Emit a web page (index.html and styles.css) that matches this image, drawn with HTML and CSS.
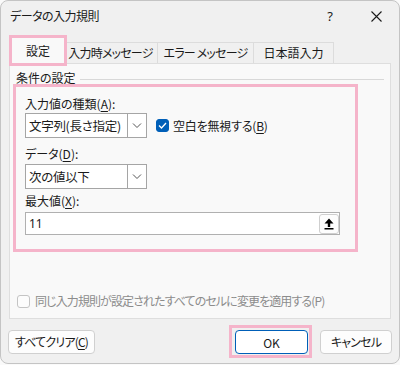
FILE: index.html
```html
<!DOCTYPE html>
<html lang="ja">
<head>
  <meta charset="UTF-8" />
  <title>データの入力規則</title>
  <link rel="stylesheet" href="styles.css">
</head>
<body>

  <div class="dialog">

    <!-- Title bar -->
    <div class="titlebar">
      <div class="title">データの入力規則</div>
      <div class="title-btn help">?</div>
      <div class="title-btn close">
        <svg width="11" height="11" viewBox="0 0 11 11"><path d="M0.5 0.5 L10.5 10.5 M10.5 0.5 L0.5 10.5" stroke="#1a1a1a" stroke-width="1.1" fill="none"/></svg>
      </div>
    </div>

    <!-- Tabs -->
    <div class="tabs">
      <div class="tab active">設定</div>
      <div class="tab">入力時メッセージ</div>
      <div class="tab">エラー メッセージ</div>
      <div class="tab">日本語入力</div>
    </div>

    <!-- Panel -->
    <div class="panel">
      <div class="group-head">
        <span>条件の設定</span>
        <div class="group-line"></div>
      </div>

      <div class="highlight">
        <div class="label first">入力値の種類(<u>A</u>):</div>
        <div class="row">
          <div class="select">
            <span class="select-text">文字列(長さ指定)</span>
            <span class="select-arrow">
              <svg width="10" height="6" viewBox="0 0 10 6"><polyline points="1,0.5 5,4.5 9,0.5" stroke="#555" stroke-width="1" fill="none"/></svg>
            </span>
          </div>
          <label class="check">
            <span class="box checked">
              <svg width="9" height="7" viewBox="0 0 9 7"><polyline points="1,3.5 3.5,6 8,1" stroke="#fff" stroke-width="1.3" fill="none"/></svg>
            </span>
            空白を無視する(<u>B</u>)
          </label>
        </div>

        <div class="label second">データ(<u>D</u>):</div>
        <div class="select">
          <span class="select-text">次の値以下</span>
          <span class="select-arrow">
            <svg width="10" height="6" viewBox="0 0 10 6"><polyline points="1,0.5 5,4.5 9,0.5" stroke="#555" stroke-width="1" fill="none"/></svg>
          </span>
        </div>

        <div class="label third">最大値(<u>X</u>):</div>
        <div class="input">
          <span class="input-text">11</span>
          <span class="ref-btn">
            <svg width="10" height="12" viewBox="0 0 10 12"><path d="M5 0.5 L9.5 5.5 L6.2 5.5 L6.2 9 L3.8 9 L3.8 5.5 L0.5 5.5 Z" fill="#000"/><rect x="0.5" y="10" width="9" height="1.5" fill="#000"/></svg>
          </span>
        </div>
      </div>

      <label class="check disabled">
        <span class="box"></span>
        同じ入力規則が設定されたすべてのセルに変更を適用する(P)
      </label>
    </div>

    <!-- Buttons -->
    <div class="buttons">
      <button class="btn clear">すべてクリア(<u>C</u>)</button>
      <div class="spacer"></div>
      <div class="ok-mark">
        <button class="btn ok">OK</button>
      </div>
      <button class="btn cancel">キャンセル</button>
    </div>

  </div>

</body>
</html>
```

FILE: styles.css
```css
body {
  margin: 0;
  background-color: #fafafa;
  font-family: 'Noto Sans CJK JP', 'Noto Sans', sans-serif;
  font-size: 12px;
  font-feature-settings: "palt";
  color: #1a1a1a;
}

u {
  text-decoration-thickness: 1px;
  text-underline-offset: 2px;
}

.dialog {
  width: 398px;
  height: 362px;
  background-color: #f0f0f0;
  border: 1px solid #c4c4c4;
  border-radius: 8px;
  display: flex;
  flex-direction: column;
}

/* Title bar */
.titlebar {
  height: 30px;
  display: flex;
  align-items: center;
  padding-left: 9px;
}

.title {
  flex: 1;
  line-height: 16px;
  letter-spacing: -0.5px;
}

.title-btn {
  width: 46px;
  height: 30px;
  display: flex;
  align-items: center;
  justify-content: center;
  font-family: 'Noto Sans', sans-serif;
  font-size: 13px;
}

/* Tabs */
.tabs {
  height: 32px;
  display: flex;
  align-items: flex-end;
  padding-left: 8px;
}

.tab {
  height: 21px;
  line-height: 20px;
  border: 1px solid #dcdcdc;
  border-bottom: none;
  border-left: none;
  background-color: #f0f0f0;
  box-sizing: border-box;
  text-align: center;
  white-space: nowrap;
  letter-spacing: -0.8px;
}

.tab:nth-child(2) { width: 94px; }
.tab:nth-child(3) { width: 96px; }
.tab:nth-child(4) { width: 80px; letter-spacing: 0; }

.tab.active {
  width: 52px;
  height: 25px;
  line-height: 25px;
  margin-left: 3px;
  letter-spacing: 0;
  background-color: #f9f9f9;
  border: none;
  outline: 3px solid #f5b4ca;
  position: relative;
}

/* Panel */
.panel {
  margin: 0 8px;
  height: 256px;
  box-sizing: border-box;
  background-color: #f9f9f9;
  border: 1px solid #dedede;
  display: flex;
  flex-direction: column;
}

.group-head {
  display: flex;
  align-items: center;
  margin: 6px 6px 0 6px;
  height: 16px;
  line-height: 16px;
}

.group-head span {
  margin-right: 4px;
}

.group-line {
  flex: 1;
  border-top: 1px solid #d8d8d8;
  margin-top: 2px;
}

.highlight {
  position: relative;
  margin: -2px 0 0 3px;
  width: 345px;
  height: 168px;
  box-sizing: border-box;
  border: 3px solid #f5b4ca;
  padding: 9px 0 0 9px;
}

.label {
  line-height: 16px;
}

.label.second { margin-top: 8px; }
.label.third { margin-top: 4px; }

.row {
  display: flex;
  align-items: center;
  margin-top: 1px;
}

.select {
  width: 122px;
  height: 25px;
  box-sizing: border-box;
  background-color: #fff;
  border: 1px solid #a5a5a5;
  display: flex;
  align-items: center;
}

.label.second + .select {
  margin-top: 2px;
}

.select-text {
  flex: 1;
  padding-left: 3px;
  font-size: 12.5px;
  white-space: nowrap;
  letter-spacing: -0.3px;
}

.select-arrow {
  width: 18px;
  height: 100%;
  border-left: 1px solid #a5a5a5;
  display: flex;
  align-items: center;
  justify-content: center;
}

.check {
  display: flex;
  align-items: center;
  line-height: 16px;
  white-space: nowrap;
}

.row .check {
  margin-left: 9px;
  letter-spacing: -0.2px;
}

.box {
  width: 13px;
  height: 13px;
  box-sizing: border-box;
  border-radius: 3px;
  border: 1px solid #b8b8b8;
  background-color: #fcfcfc;
  margin-right: 4px;
  display: flex;
  align-items: center;
  justify-content: center;
}

.box.checked {
  background-color: #005fb8;
  border-color: #005fb8;
}

.input {
  width: 315px;
  height: 23px;
  margin-top: 3px;
  box-sizing: border-box;
  background-color: #fff;
  border: 1px solid #b0b0b0;
  display: flex;
  align-items: center;
}

.input-text {
  flex: 1;
  padding-left: 3px;
  font-family: 'Noto Sans', sans-serif;
}

.ref-btn {
  width: 20px;
  height: 20px;
  box-sizing: border-box;
  border: 1px solid #cfcfcf;
  border-radius: 3px;
  background-color: #fdfdfd;
  display: flex;
  align-items: center;
  justify-content: center;
}

.check.disabled {
  color: #8c8c8c;
  margin: 41px 0 0 7px;
  letter-spacing: -0.9px;
}

.check.disabled .box {
  border-color: #c4c4c4;
  margin-right: 5px;
}

/* Buttons */
.buttons {
  display: flex;
  align-items: center;
  margin: 6px 7px 0 7px;
}

.spacer {
  flex: 1;
}

.btn {
  height: 24px;
  font-family: 'Noto Sans CJK JP', 'Noto Sans', sans-serif;
  font-size: 12px;
  font-feature-settings: "palt";
  letter-spacing: -0.8px;
  color: #1a1a1a;
  background-color: #fdfdfd;
  border: 1px solid #d0d0d0;
  border-radius: 4px;
  padding: 0;
  display: block;
}

.btn.clear { width: 87px; }

.ok-mark {
  border: 3px solid #f5b4ca;
  padding: 2px 1px 1px 3px;
}

.btn.ok {
  width: 73px;
  border-color: #005fb8;
  background-color: #fff;
  letter-spacing: 0;
}

.btn.cancel {
  width: 72px;
  margin-left: 8px;
}
```
